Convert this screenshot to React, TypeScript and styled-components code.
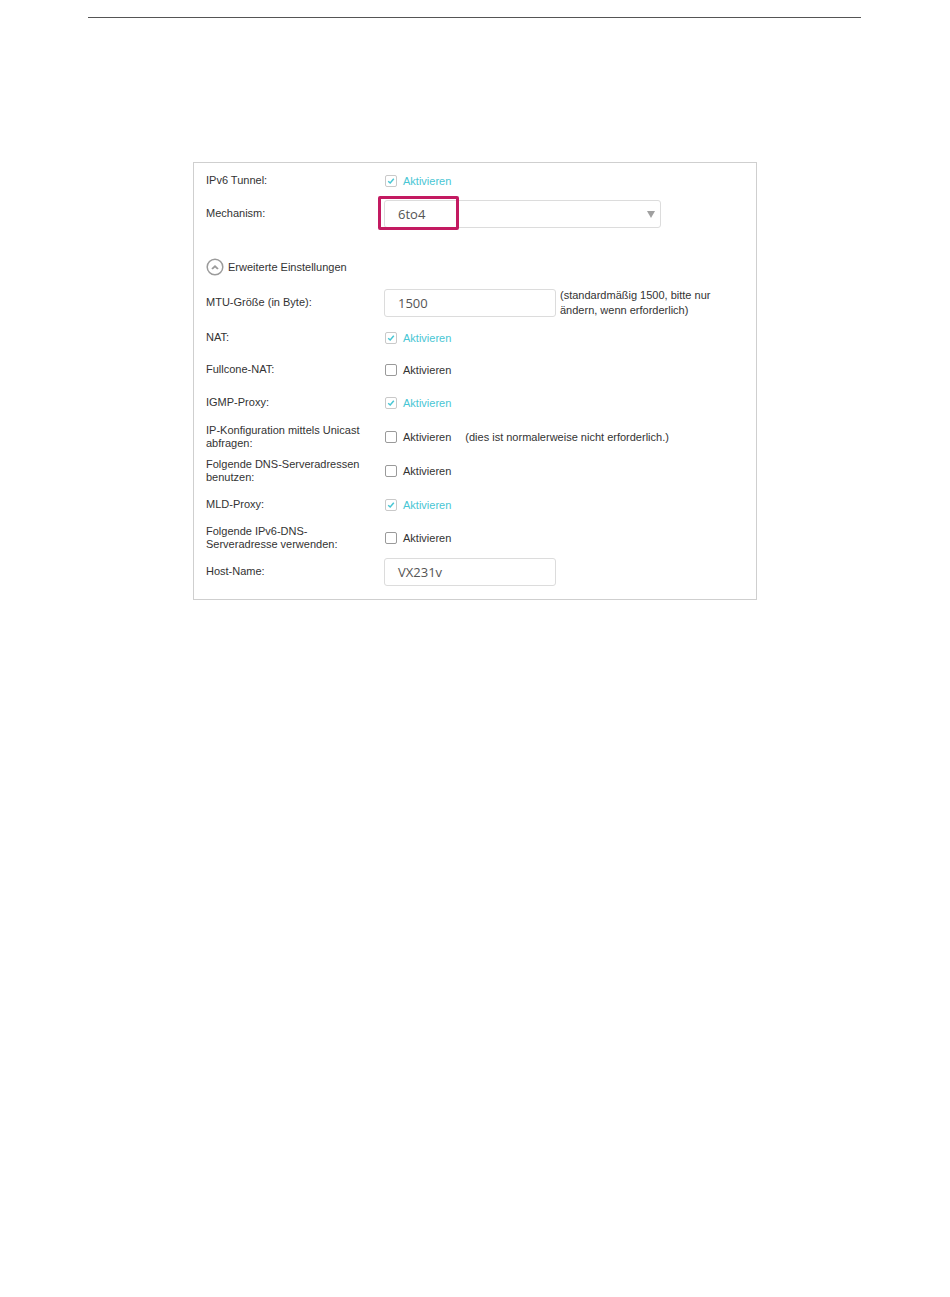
import React from "react";
import styled, { createGlobalStyle } from "styled-components";

const Global = createGlobalStyle`
  html, body { margin: 0; padding: 0; background: #ffffff; }
  body { font-family: "Liberation Sans", Arial, sans-serif; color: #333; }
`;

const Page = styled.div`
  width: 950px;
  height: 1297px;
  padding-top: 17px;
  box-sizing: border-box;
`;

const Rule = styled.div`
  margin-left: 88px;
  width: 773px;
  height: 1px;
  background: #555;
`;

const Panel = styled.div`
  margin-top: 144px;
  margin-left: 193px;
  width: 564px;
  height: 438px;
  box-sizing: border-box;
  border: 1px solid #cfcfcf;
  padding: 1px 0 0 12px;
`;

const Row = styled.div<{ $h: number; $mt?: number }>`
  display: flex;
  align-items: center;
  height: ${(p) => p.$h}px;
  margin-top: ${(p) => p.$mt ?? 0}px;
`;

const Label = styled.div`
  width: 178px;
  flex: none;
  padding-right: 18px;
  box-sizing: border-box;
  font-size: 11px;
  line-height: 13.5px;
  color: #333;
`;

const Control = styled.div`
  display: flex;
  align-items: center;
  position: relative;
`;

const Box = styled.span<{ $on: boolean }>`
  width: 10px;
  height: 10px;
  border: 1px solid ${(p) => (p.$on ? "#c9c9c9" : "#9a9a9a")};
  border-radius: 2px;
  margin-left: 1px;
  display: inline-flex;
  align-items: center;
  justify-content: center;
  background: #fff;
`;

const CheckText = styled.span<{ $on: boolean }>`
  margin-left: 6px;
  font-size: 11px;
  color: ${(p) => (p.$on ? "#48c6d4" : "#333")};
`;

const Hint = styled.span`
  margin-left: 14px;
  font-size: 11px;
  color: #333;
`;

const Select = styled.div`
  width: 277px;
  height: 28px;
  box-sizing: border-box;
  border: 1px solid #dcdcdc;
  border-radius: 3px;
  display: flex;
  align-items: center;
  justify-content: space-between;
  padding: 0 5px 0 13px;
  font-family: "Open Sans", "Noto Sans", sans-serif;
  font-size: 13px;
  color: #555;
`;

const Arrow = styled.span`
  width: 0;
  height: 0;
  border-left: 4.5px solid transparent;
  border-right: 4.5px solid transparent;
  border-top: 7px solid #a0a0a0;
`;

const Highlight = styled.div`
  position: absolute;
  left: -6px;
  top: -4px;
  width: 81px;
  height: 34px;
  box-sizing: border-box;
  border: 3px solid #c31a61;
  border-radius: 2px;
  pointer-events: none;
`;

const Input = styled.div`
  width: 172px;
  height: 28px;
  box-sizing: border-box;
  border: 1px solid #dcdcdc;
  border-radius: 3px;
  display: flex;
  align-items: center;
  padding-left: 13px;
  font-family: "Open Sans", "Noto Sans", sans-serif;
  font-size: 13px;
  color: #555;
`;

const Note = styled.div`
  margin-left: 4px;
  width: 165px;
  font-size: 11px;
  line-height: 15px;
  color: #333;
`;

const Toggle = styled.div`
  display: flex;
  align-items: center;
  font-size: 11px;
  color: #333;
  gap: 4px;
`;

const Check = ({ on, hint }: { on: boolean; hint?: string }) => (
  <Control>
    <Box $on={on}>
      {on && (
        <svg width="8" height="8" viewBox="0 0 8 8">
          <path d="M1.2 4.2 L3.2 6 L6.8 1.8" fill="none" stroke="#48c6d4" strokeWidth="1.5" />
        </svg>
      )}
    </Box>
    <CheckText $on={on}>Aktivieren</CheckText>
    {hint && <Hint>{hint}</Hint>}
  </Control>
);

export default function App() {
  return (
    <Page>
      <Global />
      <Rule />
      <Panel>
        <Row $h={34}>
          <Label>IPv6 Tunnel:</Label>
          <Check on />
        </Row>
        <Row $h={32}>
          <Label>Mechanism:</Label>
          <Control>
            <Select>
              <span>6to4</span>
              <Arrow />
            </Select>
            <Highlight />
          </Control>
        </Row>
        <Row $h={34} $mt={20}>
          <Toggle>
            <svg width="18" height="18" viewBox="0 0 18 18">
              <circle cx="9" cy="9" r="7.8" fill="#fff" stroke="#9b9b9b" strokeWidth="1.5" />
              <path d="M5.3 10.6 L9 6.9 L12.7 10.6 L11.2 11.6 L9 9.4 L6.8 11.6 Z" fill="#9b9b9b" />
            </svg>
            <span>Erweiterte Einstellungen</span>
          </Toggle>
        </Row>
        <Row $h={36} $mt={1}>
          <Label>MTU-Größe (in Byte):</Label>
          <Control>
            <Input>1500</Input>
            <Note>(standardmäßig 1500, bitte nur ändern, wenn erforderlich)</Note>
          </Control>
        </Row>
        <Row $h={33}>
          <Label>NAT:</Label>
          <Check on />
        </Row>
        <Row $h={32}>
          <Label>Fullcone-NAT:</Label>
          <Check on={false} />
        </Row>
        <Row $h={34}>
          <Label>IGMP-Proxy:</Label>
          <Check on />
        </Row>
        <Row $h={34}>
          <Label>IP-Konfiguration mittels Unicast abfragen:</Label>
          <Check on={false} hint="(dies ist normalerweise nicht erforderlich.)" />
        </Row>
        <Row $h={34}>
          <Label>Folgende DNS-Serveradressen benutzen:</Label>
          <Check on={false} />
        </Row>
        <Row $h={34}>
          <Label>MLD-Proxy:</Label>
          <Check on />
        </Row>
        <Row $h={32}>
          <Label>Folgende IPv6-DNS-Serveradresse verwenden:</Label>
          <Check on={false} />
        </Row>
        <Row $h={36}>
          <Label>Host-Name:</Label>
          <Input>VX231v</Input>
        </Row>
      </Panel>
    </Page>
  );
}
